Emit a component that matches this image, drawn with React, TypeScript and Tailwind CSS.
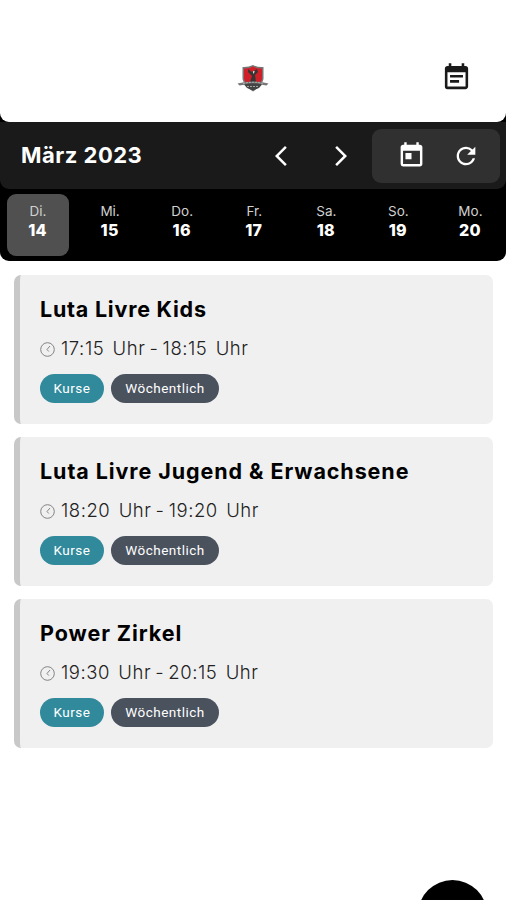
import { MdArrowBackIosNew, MdArrowForwardIos, MdEventNote, MdRefresh, MdToday } from 'react-icons/md'

interface Course {
  title: string
  titleClass: string
  start: string
  end: string
}

const days = [
  { label: 'Di.', date: 14 },
  { label: 'Mi.', date: 15 },
  { label: 'Do.', date: 16 },
  { label: 'Fr.', date: 17 },
  { label: 'Sa.', date: 18 },
  { label: 'So.', date: 19 },
  { label: 'Mo.', date: 20 }
]

const courses: Course[] = [
  { title: 'Luta Livre Kids', titleClass: 'tracking-[0.77px]', start: '17:15', end: '18:15' },
  { title: 'Luta Livre Jugend & Erwachsene', titleClass: 'tracking-[0.92px]', start: '18:20', end: '19:20' },
  { title: 'Power Zirkel', titleClass: 'tracking-[0.93px]', start: '19:30', end: '20:15' }
]

function Logo() {
  return (
    <svg viewBox="0 0 32 28" className="w-8 h-7">
      <path d="M5.5 3 Q11 3.5 16 1 Q21 3.5 26.5 3 V15 Q25 22 16 27.5 Q7 22 5.5 15Z" fill="#777" />
      <path d="M7 4.5 Q12 4.8 16 2.5 Q20 4.8 25 4.5 V15 Q23 21 16 25.5 Q9 21 7 15Z" fill="#cf2029" />
      <path d="M11 5 L15 8 L20 5 L21 8 L18 11 L19 18 H13 L15 12 L11 8Z" fill="#383434" />
      <path d="M16 7 L18 7.5 L16 10Z" fill="#ddd" />
      <path d="M0.5 19.5 Q16 15.5 31.5 19.5 L29.5 21.5 Q16 19 2.5 21.5Z" fill="#777" />
      <path d="M7 20.5 Q16 18 25 20.5 L22 24 L16 26.5 L10 24Z" fill="#444" />
      <path d="M6 19.5 Q16 17 26 19.5 M10 22.5 H22" stroke="#bbb" strokeWidth="0.8" strokeDasharray="2 1" fill="none" />
    </svg>
  )
}

function ClockIcon() {
  return (
    <svg viewBox="0 0 15 15" className="w-[15px] h-[15px]" fill="none" stroke="#777" strokeWidth="0.9">
      <circle cx="7.5" cy="7.5" r="6.8" />
      <path d="M10 4 L7 7.5 L8.8 9.5" />
    </svg>
  )
}

function CourseCard({ course }: { course: Course }) {
  return (
    <div className="h-[149px] rounded-[7px] border-l-[6px] border-[#c8c8c8] bg-[#f0f0f0] pl-5 pt-[19px]">
      <h2 className={`h-[30px] leading-[30px] text-[21.5px] font-bold text-black whitespace-nowrap ${course.titleClass}`}>
        {course.title}
      </h2>
      <div className="mt-[11px] h-7 flex items-center gap-1.5">
        <ClockIcon />
        <span className="text-[18.5px] font-light text-[#222] whitespace-pre tracking-[0.55px] [word-spacing:-1.6px]">
          {`${course.start}  Uhr - ${course.end}  Uhr`}
        </span>
      </div>
      <div className="mt-[11px] flex gap-[7px] font-[Roboto,sans-serif] text-[13.5px] tracking-[0.5px] text-white">
        <span className="w-16 h-[29px] flex items-center justify-center rounded-full bg-[#318a9b]">Kurse</span>
        <span className="w-[108px] h-[29px] flex items-center justify-center rounded-full bg-[#4a525e]">Wöchentlich</span>
      </div>
    </div>
  )
}

export default function App() {
  return (
    <div className="relative w-[506px] h-[900px] overflow-hidden bg-white font-[Inter,sans-serif]">
      <div className="rounded-b-[9px] bg-black">
        {/* Header */}
        <header className="h-[122px] pt-[62px] grid grid-cols-3 items-start rounded-b-[9px] bg-white">
          <div className="col-start-2 flex justify-center pt-0.5 pl-px">
            <Logo />
          </div>
          <div className="flex justify-end pr-[34px]">
            <MdEventNote className="w-[31px] h-[31px] text-[#1a1a1a]" />
          </div>
        </header>

        {/* Month bar */}
        <div className="h-[67px] flex items-center rounded-b-[9px] bg-[#1a1a1a] pl-[21px] pr-1.5 text-white">
          <h1 className="flex-1 text-[22px] font-bold tracking-[0.5px]">März 2023</h1>
          <MdArrowBackIosNew className="w-6 h-6" />
          <MdArrowForwardIos className="ml-9 mr-[19px] w-6 h-6" />
          <div className="w-32 h-[54px] pl-[5px] flex items-center justify-center gap-[26px] rounded-[9px] bg-[#303030]">
            <MdToday className="w-[29px] h-[29px]" />
            <MdRefresh className="w-7 h-7" />
          </div>
        </div>

        {/* Week strip */}
        <div className="h-[72px] grid grid-cols-7 pl-[1.5px] pt-[5px] text-white">
          {days.map((day, i) => (
            <div key={day.date} className="flex justify-center">
              <div className={`w-[62px] h-[62px] rounded-[9px] pt-2 text-center ${i === 0 ? 'bg-[#505050]' : ''}`}>
                <div className="pl-px text-[13.5px] leading-[19px] text-[#d0d0d0]">{day.label}</div>
                <div className="text-[16px] leading-[18px] font-extrabold tracking-[0.3px]">{day.date}</div>
              </div>
            </div>
          ))}
        </div>
      </div>

      {/* Courses */}
      <main className="pl-3.5 pr-[13px] pt-3.5 flex flex-col gap-[13px]">
        {courses.map((course) => (
          <CourseCard key={course.title} course={course} />
        ))}
      </main>

      <button className="absolute left-[418px] top-[880px] w-[69px] h-[69px] rounded-full bg-black" />
    </div>
  )
}
